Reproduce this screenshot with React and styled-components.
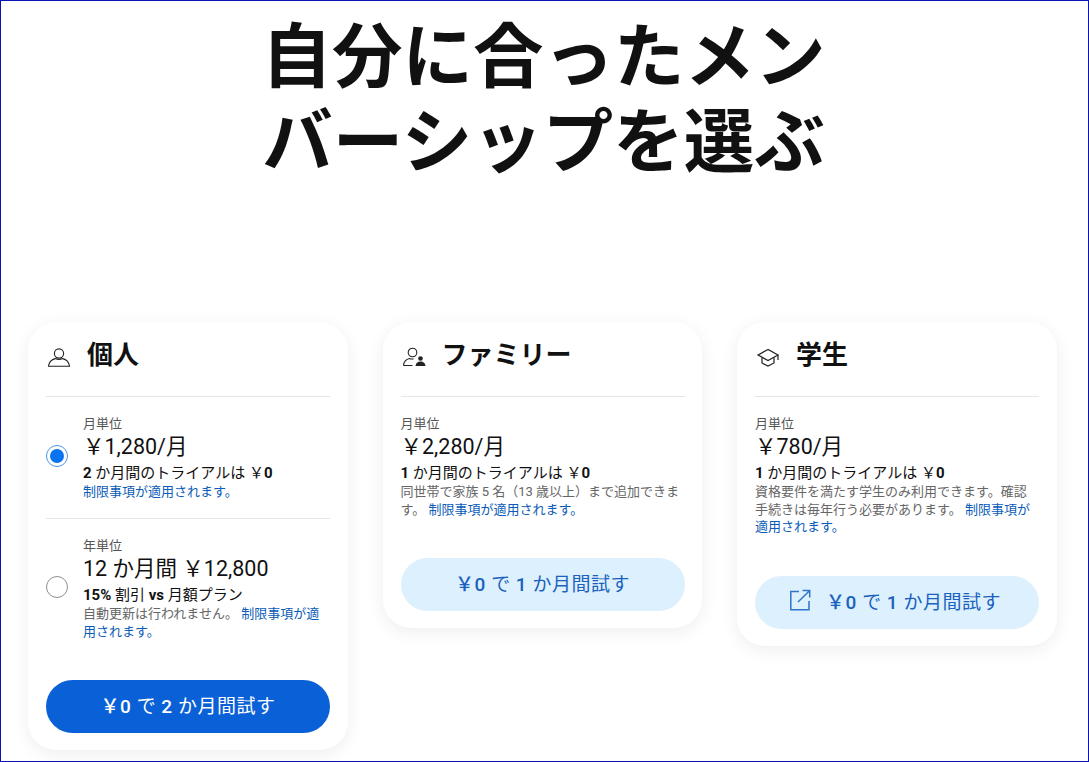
import styled, { createGlobalStyle } from "styled-components";

const GlobalStyle = createGlobalStyle`
  html, body {
    margin: 0;
    padding: 0;
    background: #fff;
  }
  body {
    font-family: Roboto, "Noto Sans CJK JP", sans-serif;
    color: #111;
  }
`;

const Page = styled.div`
  border: 1px solid #0a14b4;
  box-sizing: border-box;
  height: 762px;
  overflow: hidden;
  width: 1089px;
`;

const Title = styled.h1`
  font-size: 70.5px;
  font-weight: 700;
  line-height: 85px;
  margin: 15px 2px 0 0;
  text-align: center;
`;

const Cards = styled.div`
  align-items: flex-start;
  display: flex;
  gap: 35px;
  margin-top: 136px;
  padding-left: 27px;
`;

const Card = styled.section`
  background: #fff;
  border-radius: 28px;
  box-shadow: 0 4px 18px rgba(0, 0, 0, 0.07);
  box-sizing: border-box;
  padding: 0 17.5px 17px 18px;
  width: 319.5px;
`;

const CardHeader = styled.header`
  align-items: center;
  box-sizing: border-box;
  display: flex;
  gap: 16px;
  height: 74px;
  padding-bottom: 8px;
`;

const IconSlot = styled.span`
  display: flex;
  height: 24px;
  margin-left: 1px;
  margin-top: 3px;
  width: 24px;
`;

const PlanName = styled.h2`
  font-size: 26px;
  font-weight: 700;
  line-height: 32px;
  margin: 0;
`;

const Option = styled.div`
  align-items: center;
  border-top: 1px solid #e6e6e6;
  box-sizing: border-box;
  display: flex;
  gap: 15px;
`;

const Radio = styled.span`
  border: ${(props) => (props.$selected ? "1.5px solid #4d97ee" : "1.5px solid #8f8f8f")};
  border-radius: 50%;
  box-sizing: border-box;
  flex: none;
  height: 22px;
  margin-bottom: 3px;
  position: relative;
  width: 22px;

  &::after {
    background: #0a74f0;
    border-radius: 50%;
    content: "";
    display: ${(props) => (props.$selected ? "block" : "none")};
    height: 14px;
    left: 2.5px;
    position: absolute;
    top: 2.5px;
    width: 14px;
  }
`;

const OptionBody = styled.div`
  min-width: 0;
  padding: 19px 0 17.5px;
`;

const Period = styled.div`
  color: #555;
  font-size: 13px;
  line-height: 16px;
`;

const Price = styled.div`
  font-size: 21.5px;
  line-height: 30px;
`;

const Trial = styled.div`
  font-size: 15px;
  line-height: 18px;
  margin-top: 2px;
`;

const Note = styled.div`
  color: #666;
  font-size: 13px;
  line-height: 17.5px;
  margin-top: 1px;
`;

const Limit = styled.a`
  color: #0a5cb8;
`;

const Cta = styled.button`
  align-items: center;
  background: ${(props) => (props.$primary ? "#0a60d6" : "#ddf0fd")};
  border: none;
  border-radius: 27px;
  color: ${(props) => (props.$primary ? "#fff" : "#1a62bd")};
  display: flex;
  font-family: inherit;
  font-size: 19px;
  gap: 14px;
  height: 53px;
  justify-content: center;
  letter-spacing: 0.5px;
  margin-top: 22.6px;
  padding: 0 ${(props) => (props.$external ? "5px" : "0")} 4px 0;
  width: 100%;

  b {
    font-weight: 500;
  }
`;

const CtaIcon = styled.span`
  display: flex;
`;

const UserIcon = () => (
  <svg width="24" height="24" viewBox="0 0 24 24" fill="none" stroke="#222" strokeWidth="1.1">
    <circle cx="12" cy="8.5" r="4.6" />
    <path d="M1.5 21.2c.7-4.6 4-7 6.8-7.6 2.2 1 5.2 1 7.4 0 2.8.6 6.1 3 6.8 7.6z" />
  </svg>
);

const FamilyIcon = () => (
  <svg width="24" height="24" viewBox="0 0 24 24" fill="none" stroke="#222" strokeWidth="1.1">
    <circle cx="10.5" cy="7.5" r="4.3" />
    <path d="M1.5 20.5c.4-3.8 3-6.4 6-7 1 .5 2.5.7 4 .4M1.5 20.5h9" />
    <circle cx="18.5" cy="13.5" r="2.3" fill="#222" stroke="none" />
    <path d="M13.5 21c.3-2.8 2-4.5 5-4.5s4.7 1.7 5 4.5z" fill="#222" stroke="none" />
  </svg>
);

const CapIcon = () => (
  <svg width="24" height="24" viewBox="0 0 24 24" fill="none" stroke="#222" strokeWidth="1.2">
    <path d="M12 4.5 2 10l10 5.5L22 10z" />
    <path d="M6 12.5V18l6 3 6-3v-5.5" />
    <path d="M22 10v5" />
  </svg>
);

const ExternalIcon = () => (
  <svg width="24" height="24" viewBox="0 0 24 24" fill="none" stroke="#2f74c8" strokeWidth="1.5">
    <path d="M11 3.5H2.8v18.2H21V13" />
    <path d="M10 14 21.5 2.8M14.5 2.5h7.2v7" />
  </svg>
);

const plans = [
  {
    name: "個人",
    icon: <UserIcon />,
    options: [
      {
        selected: true,
        period: "月単位",
        price: "￥1,280/月",
        trial: <><b>2</b> か月間のトライアルは ￥<b>0</b></>,
        note: <Limit>制限事項が適用されます。</Limit>,
      },
      {
        selected: false,
        period: "年単位",
        price: "12 か月間 ￥12,800",
        trial: <><b>15%</b> 割引 <b>vs</b> 月額プラン</>,
        note: <>自動更新は行われません。 <Limit>制限事項が適用されます。</Limit></>,
      },
    ],
    cta: <><b>￥0</b> で <b>2</b> か月間試す</>,
    primary: true,
  },
  {
    name: "ファミリー",
    icon: <FamilyIcon />,
    options: [
      {
        period: "月単位",
        price: "￥2,280/月",
        trial: <><b>1</b> か月間のトライアルは ￥<b>0</b></>,
        note: <>同世帯で家族 5 名（13 歳以上）まで追加できます。 <Limit>制限事項が適用されます。</Limit></>,
      },
    ],
    cta: <><b>￥0</b> で <b>1</b> か月間試す</>,
  },
  {
    name: "学生",
    icon: <CapIcon />,
    options: [
      {
        period: "月単位",
        price: "￥780/月",
        trial: <><b>1</b> か月間のトライアルは ￥<b>0</b></>,
        note: <>資格要件を満たす学生のみ利用できます。確認手続きは毎年行う必要があります。 <Limit>制限事項が適用されます。</Limit></>,
      },
    ],
    cta: <><b>￥0</b> で <b>1</b> か月間試す</>,
    external: true,
  },
];

const App = () => {
  return (
    <Page>
      <GlobalStyle />
      <Title>自分に合ったメン<br />バーシップを選ぶ</Title>
      <Cards>
        {plans.map((plan) => (
          <Card key={plan.name}>
            <CardHeader>
              <IconSlot>{plan.icon}</IconSlot>
              <PlanName>{plan.name}</PlanName>
            </CardHeader>
            {plan.options.map((option) => (
              <Option key={option.period}>
                {option.selected !== undefined && <Radio $selected={option.selected} />}
                <OptionBody>
                  <Period>{option.period}</Period>
                  <Price>{option.price}</Price>
                  <Trial>{option.trial}</Trial>
                  <Note>{option.note}</Note>
                </OptionBody>
              </Option>
            ))}
            <Cta $primary={plan.primary} $external={plan.external}>
              {plan.external && <CtaIcon><ExternalIcon /></CtaIcon>}
              <span>{plan.cta}</span>
            </Cta>
          </Card>
        ))}
      </Cards>
    </Page>
  );
};

export default App;
